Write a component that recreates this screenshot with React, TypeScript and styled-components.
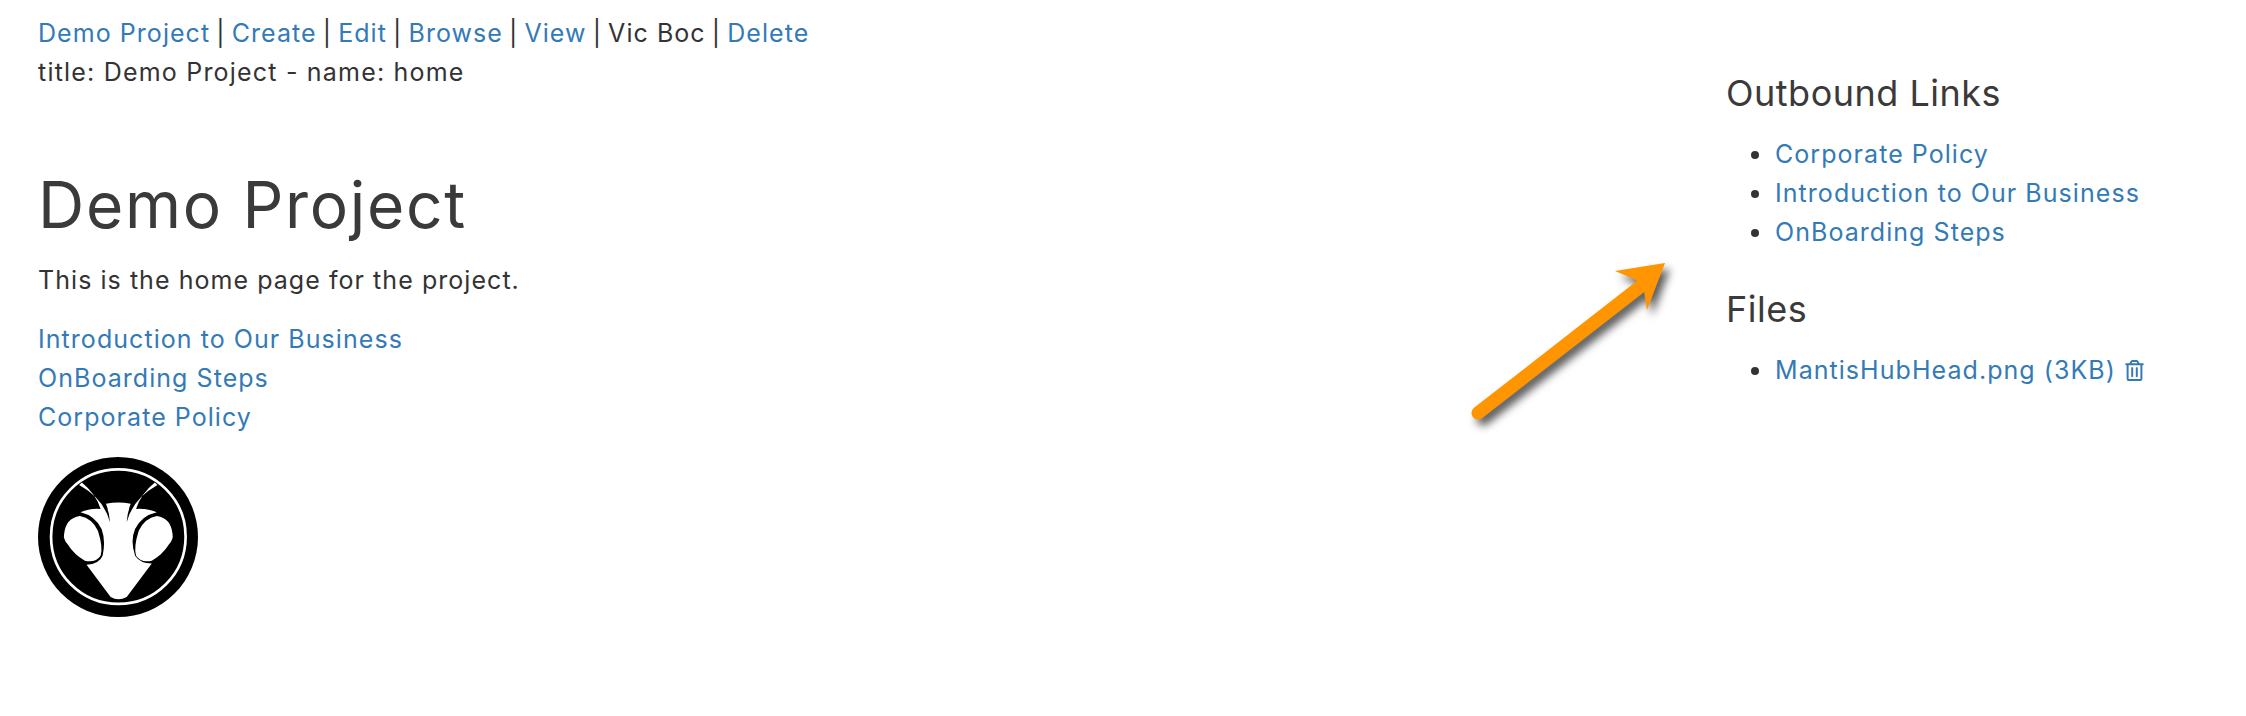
import React from "react";
import styled, { createGlobalStyle } from "styled-components";
import { FaRegTrashAlt } from "react-icons/fa";

const GlobalStyle = createGlobalStyle`
	html, body {
		margin: 0;
		padding: 0;
		background: #fff;
	}
	body {
		font-family: Inter, "Noto Sans", "Liberation Sans", sans-serif;
		font-size: 25px;
		letter-spacing: 1.05px;
		line-height: 39px;
		color: #333;
	}
`;

const Page = styled.div`
	position: relative;
	display: flex;
	min-height: 716px;
	padding: 14px 0 0 38px;
	box-sizing: border-box;
`;

const Main = styled.main`
	flex: 0 0 1688px;
`;

const Sidebar = styled.aside`
	flex: 0 0 520px;
	padding-top: 54px;
`;

const Link = styled.a`
	color: #337ab7;
	text-decoration: none;
`;

const Line = styled.div`
	white-space: nowrap;
`;

const TitleLine = styled(Line)`
	letter-spacing: 1.2px;
`;

const Separator = styled.span`
	margin: 0 -2px;
`;

const Title = styled.h1`
	margin: 73px 0 16px;
	font-size: 64px;
	letter-spacing: 1.7px;
	line-height: 80px;
	font-weight: 400;
	color: #3a3a3a;
`;

const Paragraph = styled.p`
	margin: 0 0 20px;
`;

const LinkStack = styled.div`
	display: flex;
	flex-direction: column;
	align-items: flex-start;
`;

const Logo = styled.svg`
	display: block;
	width: 160px;
	height: 160px;
	margin-top: 20px;
	filter: blur(0.5px);
`;

const SideHeading = styled.h3`
	margin: 0 0 17px;
	font-size: 36px;
	letter-spacing: 0.5px;
	line-height: 50px;
	font-weight: 400;
	color: #3a3a3a;
`;

const SideList = styled.ul`
	margin: 0 0 32px;
	padding: 0 0 0 50px;
	list-style: none;
`;

const SideItem = styled.li`
	white-space: nowrap;
	&::before {
		content: "";
		display: inline-block;
		width: 8px;
		height: 8px;
		margin: 0 16px 3px -25px;
		border-radius: 50%;
		background: #333;
		vertical-align: middle;
	}
`;

const TrashButton = styled.a`
	display: inline-flex;
	margin-left: 8px;
	color: #337ab7;
	font-size: 21px;
	vertical-align: -2px;
`;

const Arrow = styled.svg`
	position: absolute;
	left: 1460px;
	top: 250px;
	width: 225px;
	height: 185px;
	filter: drop-shadow(5px 6px 4px rgba(0, 0, 0, 0.65));
`;

const navItems: { label: string; plain?: boolean }[] = [
	{ label: "Demo Project" },
	{ label: "Create" },
	{ label: "Edit" },
	{ label: "Browse" },
	{ label: "View" },
	{ label: "Vic Boc", plain: true },
	{ label: "Delete" },
];

const MantisLogo: React.FC = () => (
	<Logo viewBox="55 50 478 478">
		<circle cx="294" cy="289" r="239" fill="#000" />
		<circle cx="295" cy="288" r="201" fill="none" stroke="#fff" strokeWidth="8" />
		<path
			d="M258 190 Q295 182 332 190 Q322 215 320 245 Q338 175 412 134 L404 126 Q362 160 348 205 Q380 202 410 215 Q365 225 345 265 Q330 300 345 345 Q360 368 395 368 L320 468 Q295 482 272 468 L200 372 Q238 370 248 345 Q258 300 245 265 Q225 225 182 215 Q210 202 242 205 Q228 160 186 126 L178 134 Q252 175 270 245 Q268 215 258 190 Z"
			fill="#fff"
		/>
		<path
			d="M133 280 Q138 232 180 226 Q217 233 234 270 Q250 320 242 345 Q227 367 195 360 Q163 342 143 310 Q130 295 133 280 Z"
			fill="#fff"
		/>
		<path
			d="M457 280 Q452 232 410 226 Q373 233 356 270 Q340 320 348 345 Q363 367 395 360 Q427 342 447 310 Q460 295 457 280 Z"
			fill="#fff"
		/>
	</Logo>
);

const App: React.FC = () => {
	return (
		<Page>
			<GlobalStyle />
			<Main>
				<Line>
					{navItems.map((item, i) => (
						<React.Fragment key={item.label}>
							{i > 0 && <Separator> | </Separator>}
							{item.plain ? item.label : <Link href="#">{item.label}</Link>}
						</React.Fragment>
					))}
				</Line>
				<TitleLine>title: Demo Project - name: home</TitleLine>
				<Title>Demo Project</Title>
				<Paragraph>This is the home page for the project.</Paragraph>
				<LinkStack>
					<Link href="#">Introduction to Our Business</Link>
					<Link href="#">OnBoarding Steps</Link>
					<Link href="#">Corporate Policy</Link>
				</LinkStack>
				<MantisLogo />
			</Main>
			<Sidebar>
				<SideHeading>Outbound Links</SideHeading>
				<SideList>
					<SideItem><Link href="#">Corporate Policy</Link></SideItem>
					<SideItem><Link href="#">Introduction to Our Business</Link></SideItem>
					<SideItem><Link href="#">OnBoarding Steps</Link></SideItem>
				</SideList>
				<SideHeading>Files</SideHeading>
				<SideList>
					<SideItem>
						<Link href="#">MantisHubHead.png (3KB)</Link>
						<TrashButton href="#"><FaRegTrashAlt /></TrashButton>
					</SideItem>
				</SideList>
			</Sidebar>
			<Arrow viewBox="1460 250 225 185">
				<path d="M1478 413 L1645 283" fill="none" stroke="#ff9500" strokeWidth="13" strokeLinecap="round" />
				<path d="M1665 263 L1615 271 L1634 279 L1643 285 L1647 310 Z" fill="#ff9500" />
			</Arrow>
		</Page>
	);
};

export default App;
